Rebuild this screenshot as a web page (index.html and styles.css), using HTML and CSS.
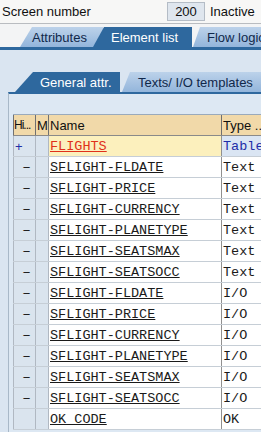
FILE: index.html
```html
<!DOCTYPE html>
<html lang="en">

<head>
    <meta charset="UTF-8">
    <meta name="viewport" content="width=device-width, initial-scale=1.0">
    <title>Screen 200 - Element list</title>
    <link rel="stylesheet" href="styles.css">
</head>

<body>

    <div class="top">
        <span class="label">Screen number</span>
        <span class="field">200</span>
        <span class="status">Inactive</span>
    </div>

    <div class="tabbar">
        <div class="tab light tab-attr">Attributes</div>
        <div class="tab dark tab-elem">Element list</div>
        <div class="tab light tab-flow">Flow logic</div>
    </div>

    <div class="panel">
        <div class="subtabs">
            <div class="tab dark tab-gen">General attr.</div>
            <div class="tab light tab-texts">Texts/ I/O templates</div>
        </div>

        <div class="subpanel">
            <table class="grid">
                <colgroup>
                    <col class="c-hi">
                    <col class="c-m">
                    <col class="c-name">
                    <col class="c-type">
                </colgroup>
                <thead>
                    <tr>
                        <th class="th-hi">Hi...</th>
                        <th>M</th>
                        <th>Name</th>
                        <th>Type ...</th>
                    </tr>
                </thead>
                <tbody>
                    <tr class="table-row">
                        <td class="mark plus">+</td>
                        <td class="mark"></td>
                        <td class="name">FLIGHTS</td>
                        <td class="type">Table</td>
                    </tr>
                    <tr>
                        <td class="mark">&minus;</td>
                        <td class="mark"></td>
                        <td class="name">SFLIGHT-FLDATE</td>
                        <td class="type">Text</td>
                    </tr>
                    <tr>
                        <td class="mark">&minus;</td>
                        <td class="mark"></td>
                        <td class="name">SFLIGHT-PRICE</td>
                        <td class="type">Text</td>
                    </tr>
                    <tr>
                        <td class="mark">&minus;</td>
                        <td class="mark"></td>
                        <td class="name">SFLIGHT-CURRENCY</td>
                        <td class="type">Text</td>
                    </tr>
                    <tr>
                        <td class="mark">&minus;</td>
                        <td class="mark"></td>
                        <td class="name">SFLIGHT-PLANETYPE</td>
                        <td class="type">Text</td>
                    </tr>
                    <tr>
                        <td class="mark">&minus;</td>
                        <td class="mark"></td>
                        <td class="name">SFLIGHT-SEATSMAX</td>
                        <td class="type">Text</td>
                    </tr>
                    <tr>
                        <td class="mark">&minus;</td>
                        <td class="mark"></td>
                        <td class="name">SFLIGHT-SEATSOCC</td>
                        <td class="type">Text</td>
                    </tr>
                    <tr>
                        <td class="mark">&minus;</td>
                        <td class="mark"></td>
                        <td class="name">SFLIGHT-FLDATE</td>
                        <td class="type">I/O</td>
                    </tr>
                    <tr>
                        <td class="mark">&minus;</td>
                        <td class="mark"></td>
                        <td class="name">SFLIGHT-PRICE</td>
                        <td class="type">I/O</td>
                    </tr>
                    <tr>
                        <td class="mark">&minus;</td>
                        <td class="mark"></td>
                        <td class="name">SFLIGHT-CURRENCY</td>
                        <td class="type">I/O</td>
                    </tr>
                    <tr>
                        <td class="mark">&minus;</td>
                        <td class="mark"></td>
                        <td class="name">SFLIGHT-PLANETYPE</td>
                        <td class="type">I/O</td>
                    </tr>
                    <tr>
                        <td class="mark">&minus;</td>
                        <td class="mark"></td>
                        <td class="name">SFLIGHT-SEATSMAX</td>
                        <td class="type">I/O</td>
                    </tr>
                    <tr>
                        <td class="mark">&minus;</td>
                        <td class="mark"></td>
                        <td class="name">SFLIGHT-SEATSOCC</td>
                        <td class="type">I/O</td>
                    </tr>
                    <tr>
                        <td class="mark"></td>
                        <td class="mark"></td>
                        <td class="name">OK_CODE</td>
                        <td class="type">OK</td>
                    </tr>
                </tbody>
            </table>
        </div>
    </div>

</body>

</html>
```

FILE: styles.css
```css
body {
    font-family: "Liberation Sans", Arial, sans-serif;
    font-size: 12px;
    background-color: #f3f4f5;
    margin: 0;
    width: 261px;
    height: 432px;
    overflow: hidden;
}

.top {
    display: flex;
    align-items: center;
    height: 23px;
    border-bottom: 1px solid #b9bcc0;
    padding-left: 2px;
    background-color: #f7f7f6;
}

.label {
    width: 165px;
    font-size: 13px;
    color: #101010;
}

.field {
    width: 36px;
    height: 17px;
    line-height: 17px;
    background-color: #dfe6ee;
    border: 1px solid #b4bcc6;
    text-align: center;
    font-size: 13px;
    color: #101010;
}

.status {
    margin-left: 5px;
    font-size: 13px;
    color: #101010;
}

.tabbar {
    display: flex;
    margin-top: 3px;
    border-bottom: 3px solid #2e689e;
    white-space: nowrap;
}

.tab {
    height: 20px;
    line-height: 21px;
    font-size: 13px;
    position: relative;
    flex-shrink: 0;
}

.light {
    background: linear-gradient(#bcd2ea, #93b5db);
    color: #10284a;
}

.dark {
    background-color: #2e689e;
    color: #fff;
    z-index: 1;
}

.tab-attr {
    margin-left: 20px;
    width: 71px;
    padding-left: 12px;
    clip-path: polygon(12px 0, 100% 0, 100% 100%, 0 100%);
}

.tab-elem {
    margin-left: -10px;
    width: 81px;
    padding-left: 18px;
    clip-path: polygon(11px 0, 100% 0, 100% 100%, 0 100%);
}

.tab-flow {
    margin-left: 1px;
    width: 54px;
    padding-left: 14px;
    clip-path: polygon(7px 0, 100% 0, 100% 100%, 0 100%);
    overflow: hidden;
}

.panel {
    background-color: #dae5f1;
    padding-top: 22px;
    height: 360px;
}

.subtabs {
    display: flex;
    padding-left: 15px;
    white-space: nowrap;
}

.tab-gen {
    width: 80px;
    padding-left: 25px;
    clip-path: polygon(18px 0, 100% 0, 100% 100%, 0 100%);
}

.tab-texts {
    margin-left: 2px;
    width: 123px;
    padding-left: 16px;
    clip-path: polygon(8px 0, 100% 0, 100% 100%, 0 100%);
}

.subpanel {
    margin-left: 8px;
    border-left: 1px solid #a8b8c8;
    border-top: 2px solid #2e689e;
    padding-top: 20px;
    padding-left: 4px;
    height: 318px;
    background-color: #dde8f3;
    overflow: hidden;
}

.grid {
    border-collapse: collapse;
    table-layout: fixed;
    width: 248px;
}

.c-hi {
    width: 22px;
}

.c-m {
    width: 13px;
}

.c-name {
    width: 173px;
}

.c-type {
    width: 40px;
}

.grid th {
    height: 20px;
    padding: 0 0 0 1px;
    background-color: #f1d9a9;
    border-top: 1px solid #9aaabb;
    border-bottom: 1px solid #8a8a8a;
    border-left: 1px solid #707070;
    font-weight: normal;
    font-size: 13px;
    text-align: left;
    color: #101010;
    overflow: hidden;
    white-space: nowrap;
}

.grid th.th-hi {
    font-size: 12px;
    letter-spacing: -1px;
    padding-left: 0;
}

.grid td {
    height: 20px;
    padding: 0 0 0 1px;
    border-bottom: 1px solid #c6ced6;
    border-left: 1px solid #b0b8c2;
    white-space: nowrap;
    overflow: hidden;
    font-family: "Liberation Mono", "Courier New", monospace;
    font-size: 13.5px;
    color: #1a1a1a;
    background-color: #fff;
}

.grid td.mark {
    background-color: #dae4ee;
    font-family: "Liberation Sans", Arial, sans-serif;
    font-size: 13px;
    text-align: center;
    padding: 0 0 0 4px;
}

.grid td.plus {
    color: #1e2ea8;
    text-align: left;
    padding-left: 1px;
}

.name {
    text-decoration: underline;
}

.grid td.type {
    border-left-color: #909090;
}

.table-row .name {
    background-color: #fcf0bd;
    color: #e0301a;
}

.table-row .type {
    background-color: #dae5f3;
    color: #1e2ea8;
}
```
